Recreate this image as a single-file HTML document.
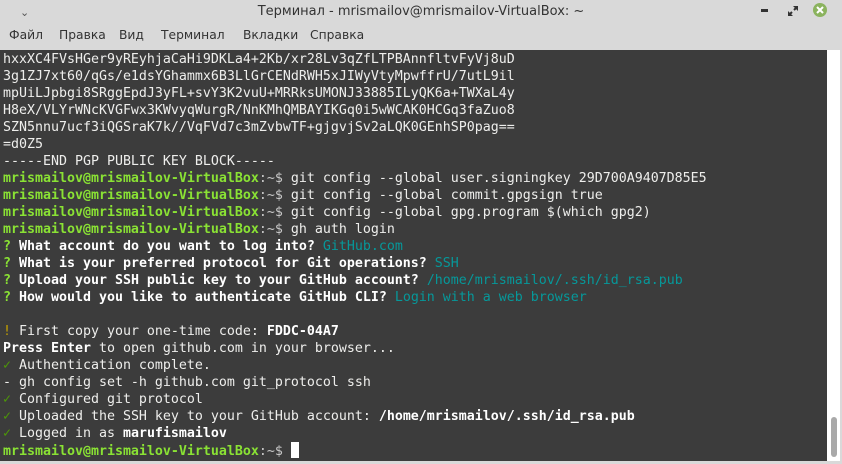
<!DOCTYPE html>
<html><head><meta charset="utf-8"><style>
*{margin:0;padding:0;box-sizing:border-box}
body{width:842px;height:464px;background:#d9d9d9;overflow:hidden;position:relative;font-family:"Liberation Sans","DejaVu Sans",sans-serif}
#title{position:absolute;left:0;top:0;width:842px;height:26px;text-align:center;font-size:13px;line-height:24px;color:#333;font-family:"DejaVu Sans",sans-serif}
.m{position:absolute;top:28px;font-size:12.3px;color:#333;font-family:"DejaVu Sans",sans-serif}
#term{position:absolute;left:0;top:50px;width:827px;height:411px;background:#3c3c3c;padding:1px 3px;font-family:"DejaVu Sans Mono","Liberation Mono",monospace;font-size:13.29px;line-height:17px;color:#eeeeec;white-space:pre}
#sb{position:absolute;left:827px;top:50px;width:13px;height:411px;background:#fff}
#thumb{position:absolute;left:831px;top:417px;width:6px;height:40px;background:#a9a9a9;border-radius:3px}
.g{color:#8ae234;font-weight:bold}
.p{color:#c8c8c8}
.c{color:#06989a}
.q{color:#8ae234;font-weight:bold}
.k{color:#4e9a06}
.y{color:#c4a000}
b{font-weight:bold;color:#fff}
.cur{display:inline-block;width:8px;height:16px;background:#fff;vertical-align:-3px}
</style></head><body>
<div style="position:absolute;left:20px;top:6px;font-size:11px;color:#555">&#8964;</div>
<div id="title">Терминал - mrismailov@mrismailov-VirtualBox: ~</div>
<div style="position:absolute;left:761px;top:9px;width:7px;height:3px;background:#333"></div>
<svg style="position:absolute;left:788px;top:6px" width="10" height="10"><path d="M1 9L4 6M9 1L6 4" stroke="#333" stroke-width="2"/><path d="M0 5V10H5Z M10 5V0H5Z" fill="#333"/></svg>
<div style="position:absolute;left:813px;top:3px;width:14px;height:14px;border-radius:50%;background:#8bb35e"></div>
<svg style="position:absolute;left:816px;top:6px" width="8" height="8"><path d="M1 1L7 7M7 1L1 7" stroke="#fff" stroke-width="2"/></svg>
<div class="m" style="left:9px">Файл</div><div class="m" style="left:59px">Правка</div><div class="m" style="left:119px">Вид</div><div class="m" style="left:161px">Терминал</div><div class="m" style="left:243px">Вкладки</div><div class="m" style="left:310px">Справка</div>
<div id="term">hxxXC4FVsHGer9yREyhjaCaHi9DKLa4+2Kb/xr28Lv3qZfLTPBAnnfltvFyVj8uD
3g1ZJ7xt60/qGs/e1dsYGhammx6B3LlGrCENdRWH5xJIWyVtyMpwffrU/7utL9il
mpUiLJpbgi8SRggEpdJ3yFL+svY3K2vuU+MRRksUMONJ33885ILyQK6a+TWXaL4y
H8eX/VLYrWNcKVGFwx3KWvyqWurgR/NnKMhQMBAYIKGq0i5wWCAK0HCGq3faZuo8
SZN5nnu7ucf3iQGSraK7k//VqFVd7c3mZvbwTF+gjgvjSv2aLQK0GEnhSP0pag==
=d0Z5
-----END PGP PUBLIC KEY BLOCK-----
<span class="g">mrismailov@mrismailov-VirtualBox</span><span class="p">:~$</span> git config --global user.signingkey 29D700A9407D85E5
<span class="g">mrismailov@mrismailov-VirtualBox</span><span class="p">:~$</span> git config --global commit.gpgsign true
<span class="g">mrismailov@mrismailov-VirtualBox</span><span class="p">:~$</span> git config --global gpg.program $(which gpg2)
<span class="g">mrismailov@mrismailov-VirtualBox</span><span class="p">:~$</span> gh auth login
<span class="q">?</span> <b>What account do you want to log into?</b> <span class="c">GitHub.com</span>
<span class="q">?</span> <b>What is your preferred protocol for Git operations?</b> <span class="c">SSH</span>
<span class="q">?</span> <b>Upload your SSH public key to your GitHub account?</b> <span class="c">/home/mrismailov/.ssh/id_rsa.pub</span>
<span class="q">?</span> <b>How would you like to authenticate GitHub CLI?</b> <span class="c">Login with a web browser</span>

<span class="y">!</span> First copy your one-time code: <b>FDDC-04A7</b>
<b>Press Enter</b> to open github.com in your browser...
<span class="k">✓</span> Authentication complete.
- gh config set -h github.com git_protocol ssh
<span class="k">✓</span> Configured git protocol
<span class="k">✓</span> Uploaded the SSH key to your GitHub account: <b>/home/mrismailov/.ssh/id_rsa.pub</b>
<span class="k">✓</span> Logged in as <b>marufismailov</b>
<span class="g">mrismailov@mrismailov-VirtualBox</span><span class="p">:~$</span> <span class="cur"></span></div>
<div id="sb"></div><div id="thumb"></div>
</body></html>
